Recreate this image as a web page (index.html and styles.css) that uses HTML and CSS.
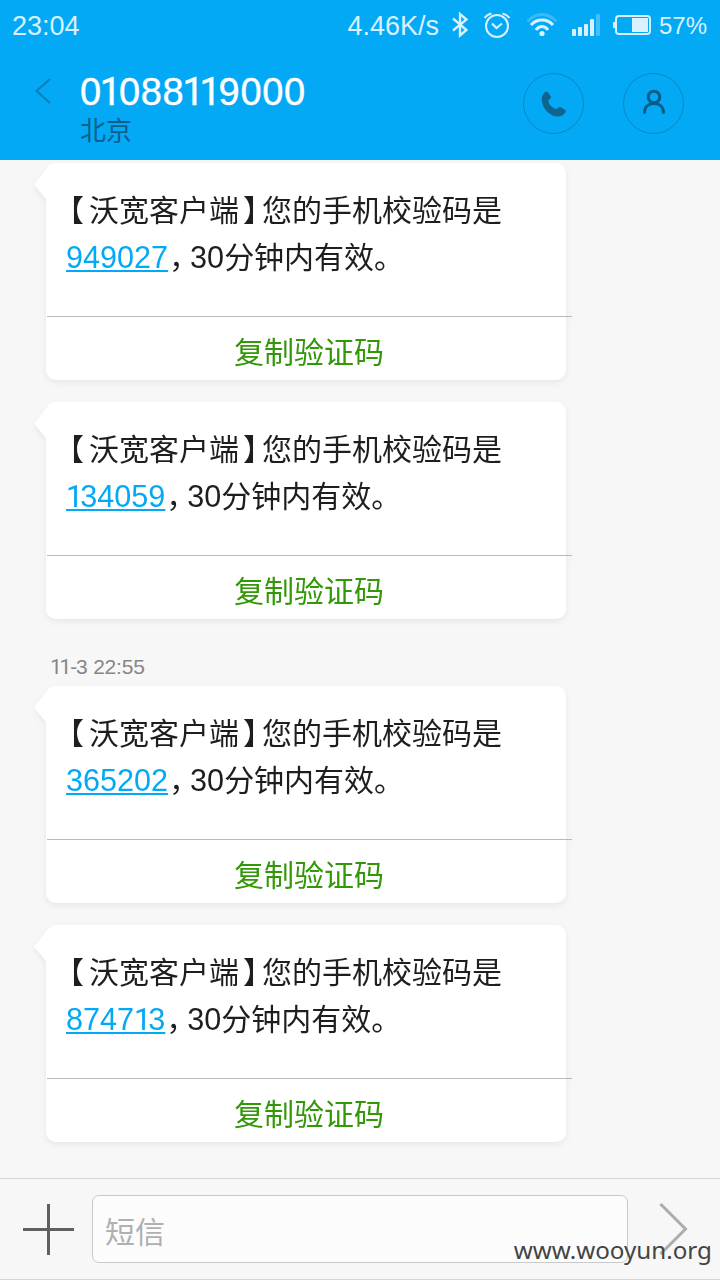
FILE: index.html
```html
<!DOCTYPE html>
<html lang="zh-CN">
  <head>
    <meta charset="UTF-8" />
    <title>01088119000</title>
    <link rel="stylesheet" href="styles.css">
  </head>
  <body>
    <div class="top">
      <div class="status">
        <span class="time">23:04</span>
        <span class="speed">4.46K/s</span>
        <svg class="bluetooth" width="18" height="28" viewBox="0 0 18 28" fill="none" stroke="currentColor" stroke-width="2.300">
          <path d="M2 7.500L15.500 19L9 24.500V3L15.500 8.500L2 19.500" />
        </svg>
        <svg class="alarm" width="28" height="28" viewBox="0 0 28 28" fill="none" stroke="currentColor" stroke-width="2">
          <circle cx="14" cy="15" r="11" />
          <path d="M9 12.500L13.500 17L19 12.500" stroke-width="2.200" />
          <path d="M1.500 7Q4 3.500 8.500 2.500M26.500 7Q24 3.500 19.500 2.500" />
        </svg>
        <svg class="wifi" width="32" height="28" viewBox="0 0 32 28" fill="none" stroke="currentColor" stroke-width="3">
          <path d="M1.500 10.500Q8 3.500 16 3.500T30.500 10.500" opacity="0.250" />
          <path d="M5 14Q9.500 9 16 9T27 14" />
          <path d="M10 19Q12.500 15.500 16 15.500T22 19" />
          <circle cx="16" cy="22.500" r="2.600" fill="currentColor" stroke="none" />
        </svg>
        <svg class="signal" width="28" height="24" viewBox="0 0 28 24" fill="currentColor">
          <rect x="0" y="16" width="4" height="7" rx="1" />
          <rect x="6" y="14" width="4" height="9" rx="1" />
          <rect x="12" y="11" width="4" height="12" rx="1" />
          <rect x="18" y="6" width="4" height="17" rx="1" />
          <rect x="24" y="1" width="4" height="22" rx="1" opacity="0.300" />
        </svg>
        <svg class="battery" width="38" height="20" viewBox="0 0 38 20">
          <rect x="3" y="1" width="34" height="18" rx="3" fill="none" stroke="currentColor" stroke-width="2" />
          <rect x="0" y="7" width="3" height="6" rx="1" fill="currentColor" />
          <rect x="19" y="3" width="16" height="14" fill="currentColor" />
        </svg>
        <span class="percent">57%</span>
      </div>
      <div class="header">
        <svg class="back" width="16" height="26" viewBox="0 0 16 26" fill="none" stroke="#0b7db3" stroke-width="2">
          <path d="M15 1L1.500 13L15 25" />
        </svg>
        <div class="contact">
          <div class="number">0<i>1</i>088<i>1</i><i>1</i>9000</div>
          <div class="place">北京</div>
        </div>
        <div class="round">
          <svg width="26" height="26" viewBox="0 0 26 26" fill="#10658f">
            <path d="M4.500 .7Q6 0 7 1.300L9.800 5.600Q10.500 7 9 8L7.200 9.500Q7.500 13 10.500 15.500Q13 18 15.500 18L17.500 16.500Q18.500 15.500 20 16.200L24.300 19Q25.500 20 24.500 21.500Q21.500 25.500 17 25.500Q11 25.500 5.500 20Q.7 14.500 .7 8.500Q.7 3.500 4.500 .7Z" />
          </svg>
        </div>
        <div class="round person">
          <svg width="24" height="26" viewBox="0 0 24 26" fill="none" stroke="#075d88" stroke-width="3" stroke-linecap="round">
            <circle cx="12" cy="8" r="5.800" />
            <path d="M2.500 23.500C2.500 17.500 6.500 14.500 12 14.500S21.500 17.500 21.500 23.500" />
          </svg>
        </div>
      </div>
    </div>

    <div class="messages">
      <div class="bubble">
        <svg class="tail" width="22" height="37" viewBox="0 0 22 37"><path d="M22 0Q17 .5 14 4L0 21.500L12 36H22Z" fill="#fff" /></svg>
        <div class="text">
          <div><span class="open">【</span>沃宽客户端<span class="close">】</span>您的手机校验码是</div>
          <div><a class="code">949027</a><span class="comma">，</span><span class="num">30</span>分钟内有效。</div>
        </div>
        <div class="copy">复制验证码</div>
      </div>

      <div class="bubble">
        <svg class="tail" width="22" height="37" viewBox="0 0 22 37"><path d="M22 0Q17 .5 14 4L0 21.500L12 36H22Z" fill="#fff" /></svg>
        <div class="text">
          <div><span class="open">【</span>沃宽客户端<span class="close">】</span>您的手机校验码是</div>
          <div><a class="code"><i>1</i>34059</a><span class="comma">，</span><span class="num">30</span>分钟内有效。</div>
        </div>
        <div class="copy">复制验证码</div>
      </div>

      <div class="date"><i>1</i><i>1</i><span class="dash">-</span>3 22:55</div>

      <div class="bubble">
        <svg class="tail" width="22" height="37" viewBox="0 0 22 37"><path d="M22 0Q17 .5 14 4L0 21.500L12 36H22Z" fill="#fff" /></svg>
        <div class="text">
          <div><span class="open">【</span>沃宽客户端<span class="close">】</span>您的手机校验码是</div>
          <div><a class="code">365202</a><span class="comma">，</span><span class="num">30</span>分钟内有效。</div>
        </div>
        <div class="copy">复制验证码</div>
      </div>

      <div class="bubble">
        <svg class="tail" width="22" height="37" viewBox="0 0 22 37"><path d="M22 0Q17 .5 14 4L0 21.500L12 36H22Z" fill="#fff" /></svg>
        <div class="text">
          <div><span class="open">【</span>沃宽客户端<span class="close">】</span>您的手机校验码是</div>
          <div><a class="code">8747<i>1</i>3</a><span class="comma">，</span><span class="num">30</span>分钟内有效。</div>
        </div>
        <div class="copy">复制验证码</div>
      </div>
    </div>

    <div class="footer">
      <svg class="plus" width="51" height="51" viewBox="0 0 51 51" stroke="#606060" stroke-width="3">
        <path d="M0 25.500H51M25.500 0V51" />
      </svg>
      <div class="input">短信</div>
      <svg class="send" width="30" height="52" viewBox="0 0 30 52" fill="none" stroke="#adadad" stroke-width="3">
        <path d="M1.500 1L26.500 26L1.500 51" />
      </svg>
      <div class="watermark">www.wooyun.org</div>
    </div>
  </body>
</html>
```
FILE: styles.css
```css
* {
  box-sizing: border-box;
}
body {
  margin: 0;
  width: 720px;
  height: 1280px;
  overflow: hidden;
  display: flex;
  flex-direction: column;
  background: #f7f7f7;
  color: #1e1e1e;
  font-family: "Liberation Sans", "Noto Sans CJK SC", sans-serif;
}
svg {
  display: block;
  flex: none;
}
/* narrow "1" without a foot */
i {
  font-family: Roboto, sans-serif;
  font-style: normal;
  margin-left: -1px;
  margin-right: -2px;
}
.top {
  height: 160px;
  background: #04a9f6;
}
.status {
  display: flex;
  align-items: center;
  height: 50px;
  padding: 0 13px 0 12px;
  color: #d9f1fe;
  font-size: 27px;
}
.time,
.speed,
.percent {
  padding-top: 2px;
}
.speed {
  margin-left: auto;
}
.bluetooth {
  margin-left: 12px;
}
.alarm {
  margin-left: 14px;
}
.wifi {
  margin-left: 15px;
}
.signal {
  margin-left: 14px;
}
.battery {
  margin-left: 13px;
}
.percent {
  margin-left: 8px;
  font-size: 24px;
}
.header {
  display: flex;
  align-items: flex-start;
  padding-left: 35px;
}
.back {
  margin-top: 28px;
}
.contact {
  flex: none;
  width: 443px;
  margin-left: 29px;
  padding-top: 20px;
}
.number {
  color: #fff;
  font-size: 38px;
  line-height: 45px;
  letter-spacing: 0.7px;
  -webkit-text-stroke: 0.4px #fff;
}
.number i {
  margin-left: -2px;
  margin-right: -3px;
}
.place {
  color: #085f8a;
  font-size: 26px;
  line-height: 33px;
}
.round {
  display: flex;
  flex: none;
  align-items: center;
  justify-content: center;
  width: 61px;
  height: 61px;
  margin-top: 23px;
  margin-right: 39px;
  border: 1px solid #0787c4;
  border-radius: 50%;
}
.person {
  padding-bottom: 3px;
}
.messages {
  flex: 1;
  padding: 3px 0 0 46px;
}
.bubble {
  position: relative;
  width: 520px;
  height: 217px;
  margin-bottom: 22px;
  border-radius: 10px;
  background: #fff;
  filter: drop-shadow(0 3px 3px rgba(0, 0, 0, 0.06));
}
.tail {
  position: absolute;
  left: -12px;
  top: 0;
}
.text {
  width: 526px;
  height: 154px;
  padding: 24px 0 0 20px;
  font-size: 30px;
  line-height: 47px;
  white-space: nowrap;
}
.text::after {
  content: "";
  display: block;
  width: 525px;
  height: 1px;
  margin: 35px 0 0 -19px;
  background: #b9b9b9;
}
.open,
.close,
.comma {
  font-family: "Noto Sans CJK SC", sans-serif;
  font-feature-settings: "halt";
  line-height: 1;
}
.open {
  margin: 0 5px 0 3px;
}
.close {
  margin: 0 4px;
}
.code {
  color: #04a9f6;
  font-size: 30.6px;
  text-decoration: underline;
  text-decoration-thickness: 2px;
  text-underline-offset: 2px;
}
.code i:first-child {
  margin-left: 0;
  margin-right: -3px;
}
.comma {
  margin-left: 1px;
  margin-right: 6px;
}
.num {
  font-size: 30.6px;
}
.copy {
  padding-left: 6px;
  height: 63px;
  color: #329808;
  font-size: 30px;
  line-height: 72px;
  text-align: center;
}
.date {
  height: 45px;
  padding: 13px 0 0 5px;
  color: #868686;
  font-size: 21px;
  line-height: 26px;
  letter-spacing: -0.2px;
}
.date i {
  margin-left: -1px;
  margin-right: -1px;
}
.dash {
  margin-right: -1px;
}
.footer {
  position: relative;
  display: flex;
  align-items: center;
  height: 102px;
  padding: 0 0 0 23px;
  border-top: 1px solid #d5d5d5;
  border-bottom: 1px solid #d5d5d5;
}
.input {
  width: 536px;
  height: 68px;
  margin-left: 18px;
  padding-left: 12px;
  border: 1px solid #c9c9c9;
  border-radius: 7px;
  background: #fcfcfc;
  color: #b0b0b0;
  font-size: 30px;
  line-height: 73px;
}
.send {
  margin-left: 31px;
}
.watermark {
  position: absolute;
  right: 8px;
  bottom: 12px;
  color: #444;
  font-family: "Noto Sans", sans-serif;
  font-size: 24.2px;
  line-height: 34px;
}
```
